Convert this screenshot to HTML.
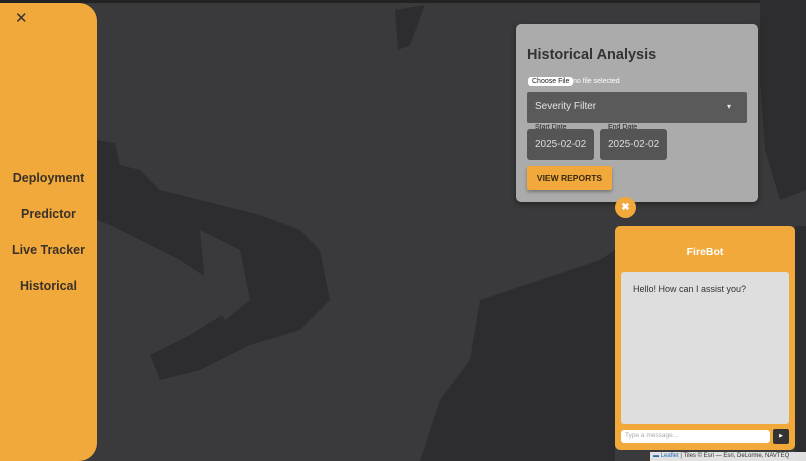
<!DOCTYPE html>
<html><head><style>
*{margin:0;padding:0;box-sizing:border-box}
body{width:806px;height:461px;overflow:hidden;background:#3a3a3c;font-family:"Liberation Sans",sans-serif;position:relative}
.map{position:absolute;inset:0}
.side{position:absolute;left:0;top:3px;width:97px;height:458px;background:#f2a93b;border-radius:0 18px 18px 0}
.side .x{position:absolute;left:15px;top:6px;font-size:15px;color:#333}
.side a{position:absolute;left:0;width:97px;text-align:center;font-weight:bold;font-size:12.5px;color:#3a3128}
.panel{position:absolute;left:516px;top:24px;width:242px;height:178px;background:rgba(192,192,192,0.85);border-radius:5px;box-shadow:0 2px 6px rgba(0,0,0,.4)}
.panel h2{position:absolute;left:11px;top:23px;font-size:14.5px;color:#333}
.cf{position:absolute;left:12px;top:53px;background:#fff;border-radius:3px;font-size:7px;padding:1px 4px;color:#222}
.nf{position:absolute;left:57px;top:54px;font-size:7px;color:#fff}
.sel{position:absolute;left:11px;top:68px;width:220px;height:31px;background:#5a5a5a;border-radius:2px;color:#e4e4e4;font-size:10px;padding:9px 8px}
.sel:after{content:"▾";position:absolute;right:16px;top:10px;font-size:8px}
.lbl{position:absolute;top:100px;font-size:7px;color:#222}
.dt{position:absolute;top:105px;width:67px;height:31px;background:#555;border-radius:3px;color:#ddd;font-size:10px;padding:10px 0 0 8px;white-space:nowrap;overflow:hidden}
.btn{position:absolute;left:11px;top:142px;width:85px;height:24px;background:#f2a93b;color:#3a2a10;font-size:8.5px;font-weight:bold;text-align:center;line-height:24px;border-radius:2px;box-shadow:0 2px 3px rgba(0,0,0,.3)}
.close{position:absolute;left:615px;top:197px;width:21px;height:21px;border-radius:50%;background:#f2a93b;color:#fff;font-size:10px;text-align:center;line-height:21px;font-weight:bold}
.chat{position:absolute;left:615px;top:226px;width:180px;height:224px;background:#f2a93b;border-radius:5px}
.chat h3{position:absolute;top:20px;width:100%;text-align:center;color:#fff;font-size:10.5px}
.msgs{position:absolute;left:6px;top:46px;width:168px;height:152px;background:#dedede;border-radius:3px;font-size:9px;color:#333;padding:12px 12px}
.in{position:absolute;left:6px;top:204px;width:149px;height:13px;background:#fff;border-radius:3px;font-size:6.5px;color:#aaa;padding:2px 4px}
.send{position:absolute;left:158px;top:203px;width:16px;height:15px;background:#333;border-radius:2px;color:#fff;font-size:5px;text-align:center;line-height:15px}
.attr{position:absolute;left:650px;top:452px;width:156px;height:9px;background:rgba(255,255,255,.85);font-size:6px;color:#333;padding:1px 3px;white-space:nowrap}
.attr span{color:#2b6cb0}
</style></head><body>
<svg class="map" width="806" height="461">
<rect width="806" height="3" fill="#222"/>
<g fill="#2d2d30">
<path d="M97 140 L115 143 L120 165 L140 170 L160 190 L200 200 L260 215 L300 230 L320 250 L330 300 L300 330 L250 345 L200 370 L160 380 L150 355 L190 335 L230 310 L210 280 L180 260 L140 240 L110 225 L97 220Z"/>
<path d="M480 300 L540 280 L600 260 L615 250 L615 461 L420 461 L440 400 L470 360Z"/>
<path d="M760 0 L806 0 L806 190 L780 200 L765 150 L760 80Z"/>
<path d="M395 10 L425 5 L410 45 L398 50Z"/>
<path d="M795 226 L806 226 L806 461 L795 461Z"/>
</g>
<path d="M200 230 L240 250 L250 300 L225 320 L205 285Z" fill="#3a3a3c"/>
</svg>
<div class="side"><span class="x">✕</span>
<a style="top:168px">Deployment</a><a style="top:204px">Predictor</a><a style="top:240px">Live Tracker</a><a style="top:276px">Historical</a></div>
<div class="panel"><h2>Historical Analysis</h2>
<span class="cf">Choose File</span><span class="nf">no file selected</span>
<div class="sel">Severity Filter</div>
<span class="lbl" style="left:19px">Start Date</span><span class="lbl" style="left:92px">End Date</span>
<div class="dt" style="left:11px">2025-02-02</div><div class="dt" style="left:84px">2025-02-02</div>
<div class="btn">VIEW REPORTS</div></div>
<div class="close">✖</div>
<div class="chat"><h3>FireBot</h3><div class="msgs">Hello! How can I assist you?</div><div class="in">Type a message...</div><div class="send">▶</div></div>
<div class="attr"><span>▬ Leaflet</span> | Tiles © Esri — Esri, DeLorme, NAVTEQ</div>
</body></html>
